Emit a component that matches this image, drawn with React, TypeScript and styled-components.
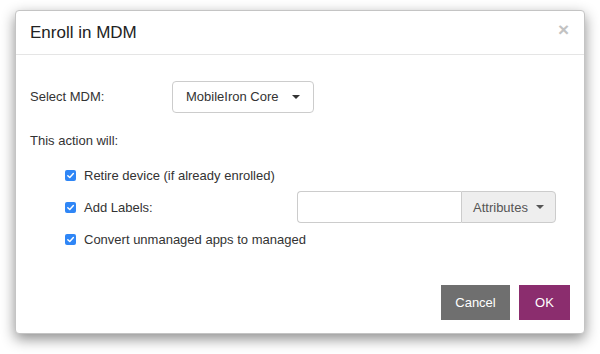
import React from "react";
import styled, { createGlobalStyle } from "styled-components";

const Global = createGlobalStyle`
  html, body { margin: 0; padding: 0; background: #fff; }
  body { font-family: "Liberation Sans", Arial, sans-serif; color: #333; }
`;

const Page = styled.div`
  width: 600px;
  height: 354px;
  padding: 10px 15px 0 15px;
  box-sizing: border-box;
`;

const Modal = styled.div`
  width: 570px;
  height: 324px;
  background: #fff;
  border: 1px solid #c4c4c4;
  border-radius: 4px;
  box-sizing: border-box;
  box-shadow: 0 5px 14px rgba(0, 0, 0, 0.45);
  display: flex;
  flex-direction: column;
`;

const Header = styled.div`
  height: 43px;
  border-bottom: 1px solid #e5e5e5;
  display: flex;
  align-items: center;
  justify-content: space-between;
  padding: 0 15px 0 14px;
`;

const Title = styled.h4`
  margin: 0;
  font-size: 17px;
  font-weight: 400;
  color: #222;
  padding-top: 1px;
`;

const Close = styled.span`
  font-size: 19px;
  font-weight: 700;
  color: #c2c2c2;
  line-height: 1;
  margin-top: -6px;
`;

const Body = styled.div`
  flex: 1;
  padding: 26px 14px 0 14px;
  font-size: 13px;
`;

const FieldRow = styled.div`
  display: flex;
  align-items: center;
  height: 31px;
`;

const FieldLabel = styled.label`
  width: 142px;
`;

const Dropdown = styled.button`
  height: 32px;
  padding: 0 13px 0 13px;
  border: 1px solid #ccc;
  border-radius: 4px;
  background: #fff;
  font: inherit;
  font-size: 13px;
  color: #333;
  display: flex;
  align-items: center;
  gap: 13px;
`;

const Caret = styled.span<{ $color?: string }>`
  width: 0;
  height: 0;
  border-left: 4px solid transparent;
  border-right: 4px solid transparent;
  border-top: 4px solid ${(p) => p.$color || "#333"};
`;

const Note = styled.p`
  margin: 21px 0 0 0;
`;

const List = styled.div`
  margin-top: 11px;
  padding-left: 35px;
  display: flex;
  flex-direction: column;
`;

const Item = styled.div`
  display: flex;
  align-items: center;
  height: 32px;
  white-space: nowrap;
`;

const Box = styled.span`
  width: 11px;
  height: 11px;
  border-radius: 2px;
  background: #2f86f6;
  display: inline-flex;
  align-items: center;
  justify-content: center;
  margin-right: 8px;
  flex-shrink: 0;
`;

const ItemText = styled.span<{ $w?: number }>`
  ${(p) => (p.$w ? `width: ${p.$w}px;` : "")}
`;

const InputGroup = styled.div`
  display: flex;
  height: 32px;
`;

const TextInput = styled.input`
  width: 164px;
  box-sizing: border-box;
  border: 1px solid #ccc;
  border-right: none;
  border-radius: 4px 0 0 4px;
  outline: none;
`;

const Addon = styled.button`
  width: 95px;
  border: 1px solid #ccc;
  border-radius: 0 4px 4px 0;
  background: #eee;
  font: inherit;
  font-size: 13px;
  color: #555;
  display: flex;
  align-items: center;
  justify-content: center;
  gap: 8px;
`;

const Footer = styled.div`
  display: flex;
  justify-content: flex-end;
  gap: 9px;
  padding: 0 14px 13px 0;
`;

const Btn = styled.button<{ $bg: string; $w: number }>`
  width: ${(p) => p.$w}px;
  height: 35px;
  border: none;
  border-radius: 0;
  background: ${(p) => p.$bg};
  color: #fff;
  font: inherit;
  font-size: 13px;
`;

const Check = () => (
  <Box>
    <svg width="9" height="9" viewBox="0 0 10 10">
      <path d="M2 5.2 L4.2 7.3 L8.2 2.8" fill="none" stroke="#fff" strokeWidth="1.6" strokeLinecap="round" strokeLinejoin="round" />
    </svg>
  </Box>
);

export default function App() {
  return (
    <>
      <Global />
      <Page>
        <Modal>
          <Header>
            <Title>Enroll in MDM</Title>
            <Close>×</Close>
          </Header>
          <Body>
            <FieldRow>
              <FieldLabel>Select MDM:</FieldLabel>
              <Dropdown>
                MobileIron Core <Caret />
              </Dropdown>
            </FieldRow>
            <Note>This action will:</Note>
            <List>
              <Item>
                <Check />
                <ItemText>Retire device (if already enrolled)</ItemText>
              </Item>
              <Item>
                <Check />
                <ItemText $w={213}>Add Labels:</ItemText>
                <InputGroup>
                  <TextInput />
                  <Addon>
                    Attributes <Caret $color="#555" />
                  </Addon>
                </InputGroup>
              </Item>
              <Item>
                <Check />
                <ItemText>Convert unmanaged apps to managed</ItemText>
              </Item>
            </List>
          </Body>
          <Footer>
            <Btn $bg="#6f6f6f" $w={69}>Cancel</Btn>
            <Btn $bg="#8b2d6e" $w={51}>OK</Btn>
          </Footer>
        </Modal>
      </Page>
    </>
  );
}
